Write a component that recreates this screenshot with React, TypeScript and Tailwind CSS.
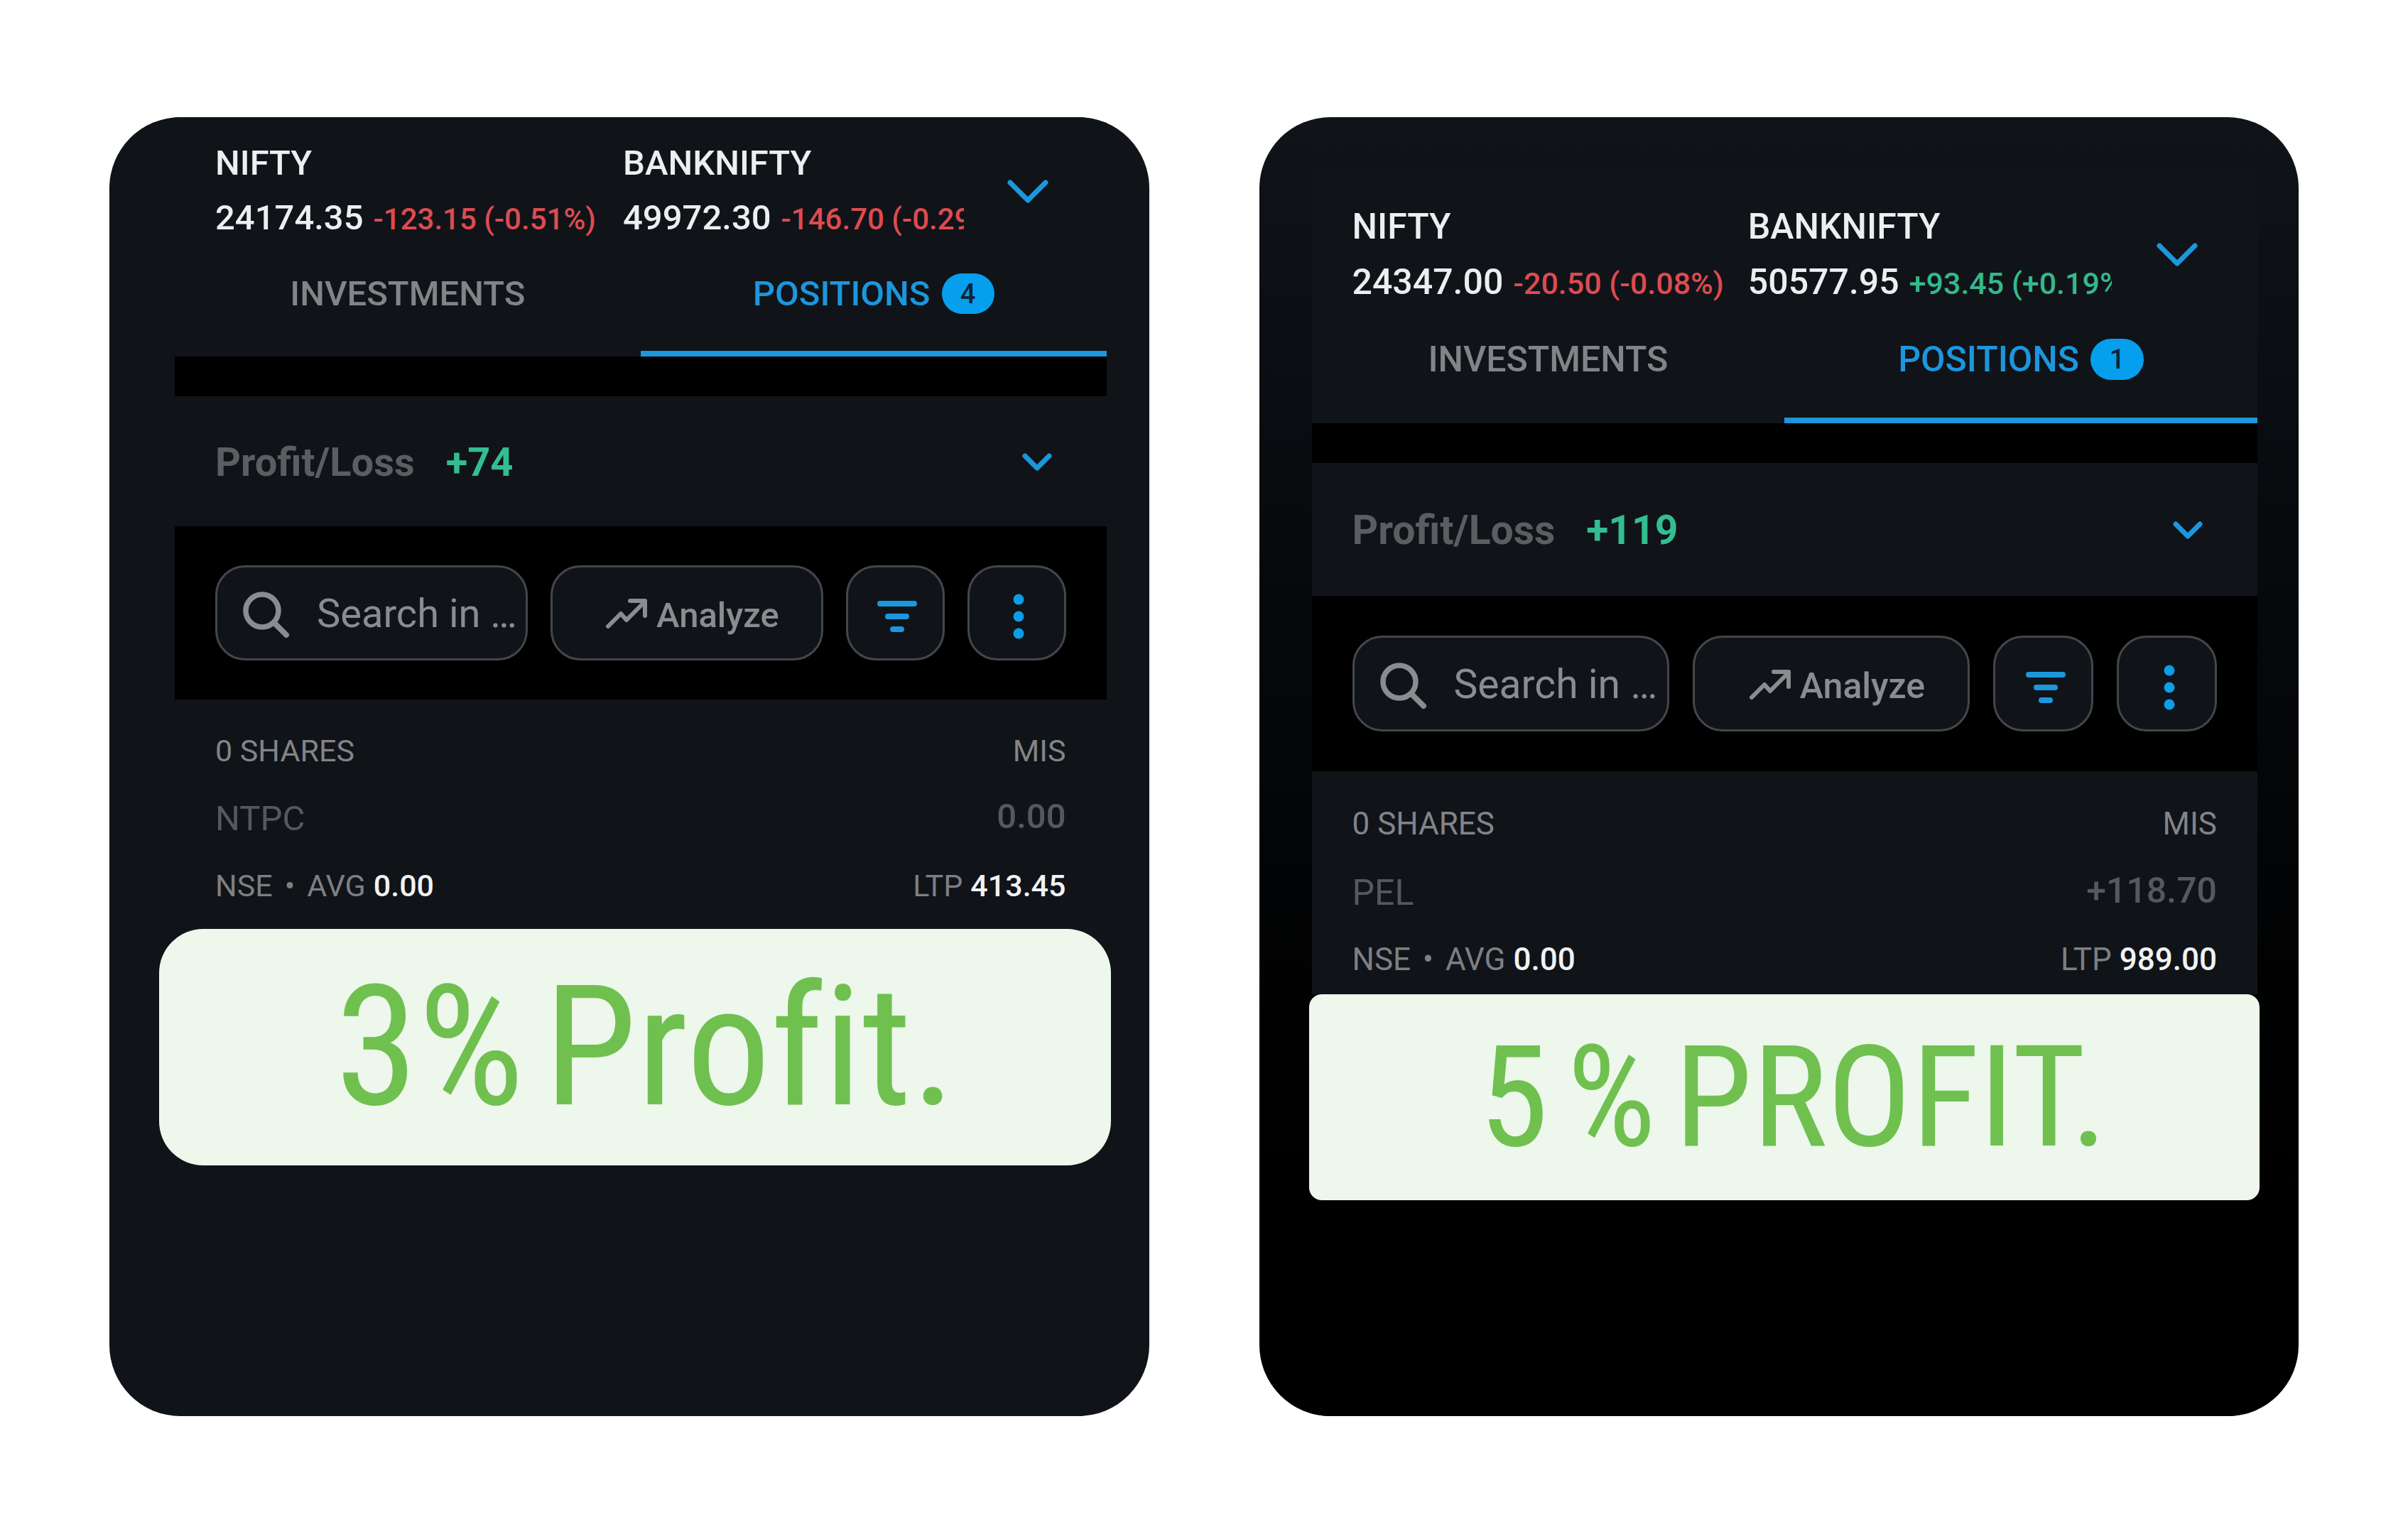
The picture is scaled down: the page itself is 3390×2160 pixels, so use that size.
import React from "react";

type Tone = "up" | "down";

type Quote = { name: string; price: string; change: string; tone: Tone };

type Position = {
  shares: string;
  product: string;
  symbol: string;
  pnl: string;
  avg: string;
  ltp: string;
};

type Sizes = {
  card: string;
  header: string;
  quotes: string;
  toggle: string;
  title: string;
  change: string;
  tab: string;
  badge: string;
  side: string;
  summary: string;
  summaryText: string;
  toolbar: string;
  tool: string;
  analyze: string;
  square: string;
  searchText: string;
  rows: string;
  rowSmall: string;
  rowValue: string;
  banner: string;
  rest: string;
};

const compact: Sizes = {
  card: "bg-[#101318] pl-[92px] pr-[60px]",
  header: "pt-[35px]",
  quotes: "gap-x-[38px] gap-y-[17px]",
  toggle: "w-[180px] mr-[21px]",
  title: "text-[49px] leading-[60px]",
  change: "text-[42px] leading-[60px]",
  tab: "h-[163px] text-[49px] leading-[60px]",
  badge: "h-[57px] w-[74px] text-[38px]",
  side: "px-[57px]",
  summary: "h-[183px]",
  summaryText: "text-[56px] leading-[68px]",
  toolbar: "gap-[32px] py-[55px]",
  tool: "h-[134px] rounded-[42px]",
  analyze: "w-[384px] text-[49px]",
  square: "w-[139px]",
  searchText: "text-[56px]",
  rows: "pt-[46px] pb-[35px]",
  rowSmall: "text-[43px] leading-[52px]",
  rowValue: "text-[49px]",
  banner: "-ml-[22px] -mr-[6px] h-[333px] rounded-[62px] gap-[28px] pl-[30px] text-[236px]",
  rest: "",
};

const roomy: Sizes = {
  card: "bg-linear-to-b from-[#101318] via-[#040608] to-black pl-[74px] pr-[58px] pt-[70px]",
  header: "pt-[53px]",
  quotes: "gap-x-[34px] gap-y-[16px]",
  toggle: "w-[183px] mr-[22px]",
  title: "text-[50px] leading-[62px]",
  change: "text-[43px] leading-[62px]",
  tab: "h-[166px] text-[50px] leading-[62px]",
  badge: "h-[58px] w-[75px] text-[38px]",
  side: "px-[57px]",
  summary: "h-[187px]",
  summaryText: "text-[57px] leading-[68px]",
  toolbar: "gap-[33px] py-[56px]",
  tool: "h-[135px] rounded-[42px]",
  analyze: "w-[390px] text-[50px]",
  square: "w-[141px]",
  searchText: "text-[57px]",
  rows: "pt-[48px] pb-[22px]",
  rowSmall: "text-[44px] leading-[53px]",
  rowValue: "text-[50px]",
  banner: "-ml-[4px] -mr-[3px] h-[290px] rounded-[18px] gap-[26px] pl-[26px] text-[198px]",
  rest: "bg-black",
};

function Chevron({ className }: { className: string }) {
  return (
    <svg viewBox="0 0 58 34" className={className} fill="none" stroke="#1c96dc" strokeWidth="7" strokeLinecap="round" strokeLinejoin="round" aria-hidden="true">
      <path d="M4 4 29 29 54 4" />
    </svg>
  );
}

function SearchIcon() {
  return (
    <svg viewBox="0 0 66 66" className="mt-1 size-[66px] shrink-0" fill="none" stroke="#8a8d90" strokeLinecap="round" aria-hidden="true">
      <circle cx="27" cy="27" r="23" strokeWidth="7.5" />
      <path d="M44 44 61 61" strokeWidth="8" />
    </svg>
  );
}

function TrendIcon() {
  return (
    <svg viewBox="0 0 60 44" className="h-[44px] w-[60px] shrink-0" fill="none" stroke="#8a8d90" strokeWidth="6" strokeLinecap="round" strokeLinejoin="round" aria-hidden="true">
      <path d="M4 40 22 22 30 31 56 5" />
      <path d="M35 4H56V25" />
    </svg>
  );
}

function FilterIcon() {
  return (
    <svg viewBox="0 0 56 44" className="h-[44px] w-[56px]" stroke="#1c96dc" strokeWidth="8" strokeLinecap="round" aria-hidden="true">
      <path d="M4 4H52M15 22H41M22 40H34" />
    </svg>
  );
}

function DotsIcon() {
  return (
    <svg viewBox="0 0 16 64" className="h-[64px] w-[16px]" fill="#0d9de8" aria-hidden="true">
      <circle cx="8" cy="8" r="7.5" />
      <circle cx="8" cy="32" r="7.5" />
      <circle cx="8" cy="56" r="7.5" />
    </svg>
  );
}

function QuoteBlock({ quote, sizes }: { quote: Quote; sizes: Sizes }) {
  return (
    <div className="contents">
      <span className={`row-start-1 font-medium text-[#eceef0] ${sizes.title}`}>{quote.name}</span>
      <span className="row-start-2 flex items-baseline gap-[14px] whitespace-nowrap">
        <span className={`font-medium text-[#eceef0] ${sizes.title}`}>{quote.price}</span>
        <span className={`font-medium ${quote.tone === "up" ? "text-[#35b88b]" : "text-[#dd4b50]"} ${sizes.change}`}>{quote.change}</span>
      </span>
    </div>
  );
}

function PositionsCard({
  id,
  sizes,
  quotes,
  count,
  total,
  position,
  headline,
}: {
  id: string;
  sizes: Sizes;
  quotes: Quote[];
  count: string;
  total: string;
  position: Position;
  headline: string;
}) {
  const tool = `border-[3px] border-[#43464b] bg-[#101318] ${sizes.tool}`;
  return (
    <section className={`flex min-h-[1829px] min-w-0 flex-col overflow-hidden rounded-[100px] ${sizes.card}`}>
      <div className="bg-[#101318]">
        <header className={`flex items-center pl-[57px] ${sizes.header}`}>
          <div className={`grid min-w-0 flex-1 grid-cols-[max-content_max-content] overflow-hidden ${sizes.quotes}`}>
            {quotes.map((quote) => (
              <QuoteBlock key={quote.name} quote={quote} sizes={sizes} />
            ))}
          </div>
          <button type="button" aria-label="Show indices" className={`flex justify-center ${sizes.toggle}`}>
            <Chevron className="h-[34px] w-[58px]" />
          </button>
        </header>

        <nav className="grid grid-cols-2">
          <button type="button" className={`flex items-center justify-center border-b-8 border-transparent pb-[6px] font-medium text-[#828487] ${sizes.tab}`}>
            INVESTMENTS
          </button>
          <button type="button" className={`flex items-center justify-center gap-[16px] border-b-8 border-[#1c96dc] pb-[6px] font-medium text-[#1c96dc] ${sizes.tab}`}>
            POSITIONS
            <span className={`flex items-center justify-center rounded-full bg-[#059fee] text-[#0b2438] ${sizes.badge}`}>{count}</span>
          </button>
        </nav>
        <div className="h-[56px] bg-black" />

        <div className={`flex items-center justify-between pt-[2px] ${sizes.side} ${sizes.summary}`}>
          <p className={`flex gap-[44px] font-bold ${sizes.summaryText}`}>
            <span className="text-[#5b5e61]">Profit/Loss</span>
            <span className="text-[#33bd90]">{total}</span>
          </p>
          <button type="button" aria-label="Show profit and loss details" className="mr-[19px]">
            <svg viewBox="0 0 44 28" className="h-[28px] w-[44px]" fill="none" stroke="#1c96dc" strokeWidth="7" strokeLinecap="round" strokeLinejoin="round" aria-hidden="true">
              <path d="M5 5 22 22 39 5" />
            </svg>
          </button>
        </div>

        <div className={`flex bg-black ${sizes.side} ${sizes.toolbar}`}>
          <label htmlFor={id} className={`flex min-w-0 flex-1 items-center gap-[38px] pl-[36px] pt-[2px] ${tool}`}>
            <SearchIcon />
            <input
              id={id}
              type="text"
              aria-label="Search in positions"
              placeholder="Search in …"
              className={`min-w-0 flex-1 bg-transparent text-[#8a8d90] outline-none placeholder:text-[#8a8d90] ${sizes.searchText}`}
            />
          </label>
          <button type="button" className={`flex items-center justify-center gap-[12px] pl-[16px] pt-[2px] font-medium text-[#8a8d90] ${tool} ${sizes.analyze}`}>
            <TrendIcon />
            <span className="pt-[6px]">Analyze</span>
          </button>
          <button type="button" aria-label="Filter" className={`flex items-center justify-center pt-[10px] pl-[6px] ${tool} ${sizes.square}`}>
            <FilterIcon />
          </button>
          <button type="button" aria-label="More options" className={`flex items-center justify-center pt-[10px] pl-[6px] ${tool} ${sizes.square}`}>
            <DotsIcon />
          </button>
        </div>

        <div className={`${sizes.side} ${sizes.rows}`}>
          <div className={`flex justify-between text-[#828487] ${sizes.rowSmall}`}>
            <span>{position.shares}</span>
            <span>{position.product}</span>
          </div>
          <div className={`mt-[40px] flex items-start justify-between text-[#56595c] ${sizes.rowValue}`}>
            <span className="leading-[60px]">{position.symbol}</span>
            <span className="font-medium leading-[54px]">{position.pnl}</span>
          </div>
          <div className={`mt-[38px] flex justify-between text-[#7d7f83] ${sizes.rowSmall}`}>
            <span className="flex gap-[11px]">
              <span className="flex gap-[17px]">
                <span>NSE</span>
                <span>•</span>
                <span>AVG</span>
              </span>
              <span className="font-medium text-[#f1f2f4]">{position.avg}</span>
            </span>
            <span className="flex gap-[11px]">
              <span>LTP</span>
              <span className="font-medium text-[#f1f2f4]">{position.ltp}</span>
            </span>
          </div>
        </div>
      </div>

      <div className={`flex flex-1 flex-col ${sizes.rest}`}>
        <h2 className={`flex items-center justify-center bg-[#edf7eb] font-['Roboto_Condensed','Roboto',sans-serif] font-normal leading-none whitespace-nowrap text-[#70c050] [font-variant-ligatures:none] ${sizes.banner}`}>
          {headline.split(" ").map((word) => (
            <span key={word}>{word}</span>
          ))}
        </h2>
      </div>
    </section>
  );
}

export default function App() {
  return (
    <main className="grid min-h-screen grid-cols-2 items-start gap-[155px] bg-white px-[154px] py-[165px] font-['Roboto',sans-serif]">
      <PositionsCard
        id="search-left"
        sizes={compact}
        quotes={[
          { name: "NIFTY", price: "24174.35", change: "-123.15 (-0.51%)", tone: "down" },
          { name: "BANKNIFTY", price: "49972.30", change: "-146.70 (-0.29%)", tone: "down" },
        ]}
        count="4"
        total="+74"
        position={{ shares: "0 SHARES", product: "MIS", symbol: "NTPC", pnl: "0.00", avg: "0.00", ltp: "413.45" }}
        headline="3% Profit."
      />
      <PositionsCard
        id="search-right"
        sizes={roomy}
        quotes={[
          { name: "NIFTY", price: "24347.00", change: "-20.50 (-0.08%)", tone: "down" },
          { name: "BANKNIFTY", price: "50577.95", change: "+93.45 (+0.19%)", tone: "up" },
        ]}
        count="1"
        total="+119"
        position={{ shares: "0 SHARES", product: "MIS", symbol: "PEL", pnl: "+118.70", avg: "0.00", ltp: "989.00" }}
        headline="5 % PROFIT."
      />
    </main>
  );
}
